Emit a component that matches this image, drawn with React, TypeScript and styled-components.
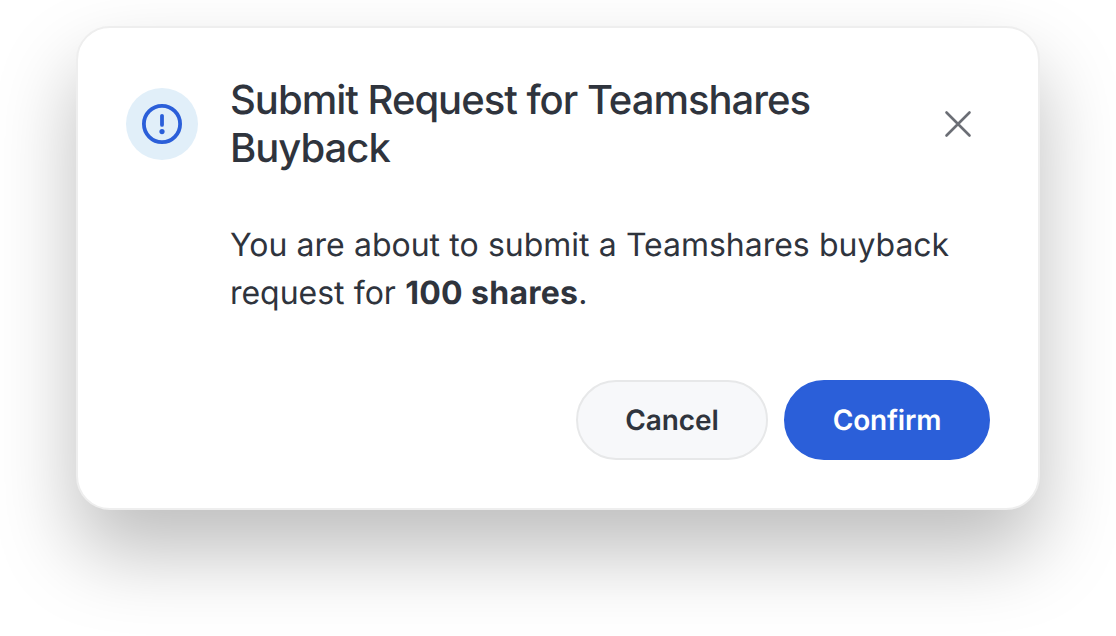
import React from 'react';
import styled, { createGlobalStyle } from 'styled-components';

const GlobalStyle = createGlobalStyle`
  * { box-sizing: border-box; }
  body { margin: 0; background: #fff; overflow: hidden; font-family: Inter, "Liberation Sans", sans-serif; color: #2f343d; text-rendering: geometricPrecision; }
`;

const Page = styled.main`
  height: 636px;
  padding: 26px 76px 0;
  overflow: hidden;
`;

const Dialog = styled.section`
  width: 964px;
  height: 484px;
  padding: 48px;
  border: 2px solid #eeeeee;
  border-radius: 34px;
  background: #fff;
  box-shadow: 0 42px 80px rgba(0, 0, 0, 0.26);
`;

const Header = styled.header`
  display: flex;
  align-items: center;
  height: 96px;
`;

const Badge = styled.div`
  display: flex;
  align-items: center;
  justify-content: center;
  flex: none;
  width: 72px;
  height: 72px;
  margin-right: 32px;
  border-radius: 50%;
  background: #e1eff9;
`;

const Title = styled.h1`
  flex: 1;
  margin: 0;
  font-size: 40px;
  line-height: 48px;
  font-weight: 500;
  letter-spacing: -1px;
`;

const CloseButton = styled.button`
  display: flex;
  align-items: center;
  justify-content: center;
  width: 64px;
  height: 64px;
  padding: 0;
  border: 0;
  background: transparent;
`;

const Message = styled.p`
  margin: 49px 0 0 104px;
  font-size: 32px;
  line-height: 48px;
  font-weight: 400;
  letter-spacing: -0.03px;
  word-spacing: 0.35px;
`;

const Amount = styled.strong`
  font-weight: 700;
  letter-spacing: 0.25px;
`;

const Actions = styled.footer`
  display: flex;
  justify-content: flex-end;
  gap: 16px;
  margin-top: 63px;
`;

const Button = styled.button<{ $primary?: boolean }>`
  width: ${p => (p.$primary ? 206 : 192)}px;
  height: 80px;
  padding: 0;
  border: 2px solid ${p => (p.$primary ? '#2b5fd9' : '#e7e8e9')};
  border-radius: 40px;
  background: ${p => (p.$primary ? '#2b5fd9' : '#f7f8fa')};
  color: ${p => (p.$primary ? '#fff' : '#2f343d')};
  font: 600 28px/40px Inter, "Liberation Sans", sans-serif;
  letter-spacing: ${p => (p.$primary ? -0.2 : -0.05)}px;
  text-rendering: inherit;
`;

export default function App() {
  return (
    <Page>
      <GlobalStyle />
      <Dialog role="dialog" aria-labelledby="title">
        <Header>
          <Badge>
            <svg width="48" height="48" viewBox="0 0 48 48" fill="none" stroke="#2b5fd9">
              <circle cx="24" cy="24" r="18.1" strokeWidth="3.8" />
              <path d="M24 15.8v9.1" strokeWidth="3.8" strokeLinecap="round" />
              <circle cx="24" cy="31.6" r="2.6" fill="#2b5fd9" stroke="none" />
            </svg>
          </Badge>
          <Title id="title">Submit Request for Teamshares<br />Buyback</Title>
          <CloseButton aria-label="Close">
            <svg width="28" height="28" viewBox="0 0 28 28" fill="none" stroke="#6b6e75" strokeWidth="2.6" strokeLinecap="round">
              <path d="M2.5 2.5l23 23M25.5 2.5l-23 23" />
            </svg>
          </CloseButton>
        </Header>
        <Message>You are about to submit a Teamshares buyback<br />request for <Amount>100 shares</Amount>.</Message>
        <Actions>
          <Button>Cancel</Button>
          <Button $primary>Confirm</Button>
        </Actions>
      </Dialog>
    </Page>
  );
}
